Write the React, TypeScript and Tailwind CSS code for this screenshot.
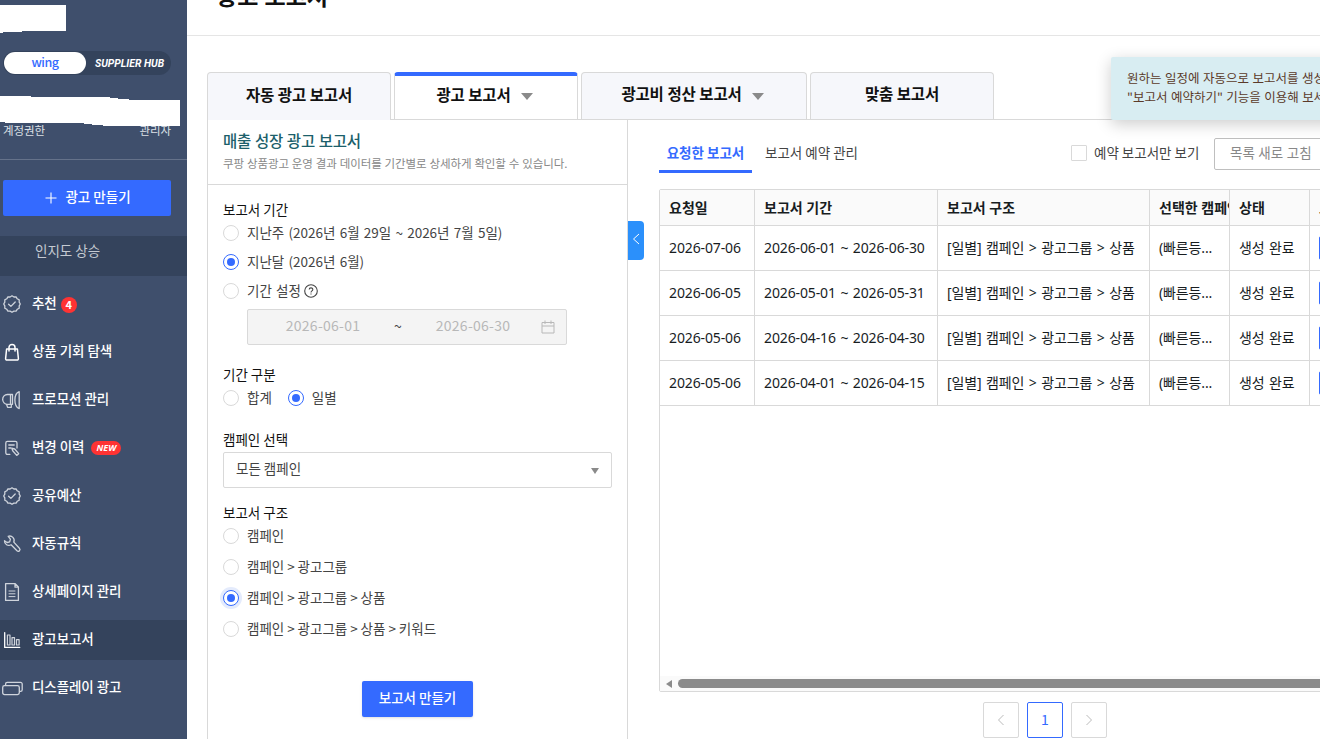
import React from 'react';

type IconProps = { children: React.ReactNode };

const Icon: React.FC<IconProps> = ({ children }) => (
  <svg width="24" height="24" viewBox="0 0 24 24" fill="none" stroke="#cfd4dc" strokeWidth="1.3" strokeLinejoin="round" strokeLinecap="round">
    {children}
  </svg>
);

const BadgeCheckIcon = () => (
  <Icon>
    <path d="M12 3.8l1.9 1.2 2.2-.1 1.1 1.9 2 1.1v2.3l1.1 1.8-1.1 1.9v2.3l-2 1.1-1.1 1.9-2.2-.1-1.9 1.2-1.9-1.2-2.2.1-1.1-1.9-2-1.1v-2.3L3.7 12l1.1-1.8V7.9l2-1.1 1.1-1.9 2.2.1z" />
    <path d="M8.6 12.2l2.3 2.2 4.3-4.4" />
  </Icon>
);

const BagIcon = () => (
  <Icon>
    <g stroke="#fff" strokeWidth="1.5">
      <path d="M6.6 9h10.8l1 9.6a1.4 1.4 0 0 1-1.4 1.5H7a1.4 1.4 0 0 1-1.4-1.5z" />
      <path d="M9 11V7.5a3 3 0 0 1 6 0V11" />
    </g>
  </Icon>
);

const MegaphoneIcon = () => (
  <Icon>
    <path d="M12.5 6.5h-5a4.7 4.7 0 0 0-4.8 4.9 4.7 4.7 0 0 0 4.8 4.900h5z" />
    <path d="M10.5 7v9M19.200 3.600v17c-2.800-1-4.300-4-4.300-8.500s1.500-7.500 4.300-8.500z" />
    <path d="M6.6 16.600l1 2.700h3.700v-2.700" />
  </Icon>
);

const HistoryIcon = () => (
  <Icon>
    <path d="M9.8 18.4H7.4a1.6 1.6 0 0 1-1.6-1.6V7a1.6 1.6 0 0 1 1.6-1.6h8A1.6 1.6 0 0 1 17 7v5" />
    <path d="M8.8 9h5.4M8.8 12h2" />
    <path d="M11.8 12.2l2.9.8 4 4.7-2 1.7-4-4.6z" />
  </Icon>
);

const WrenchIcon = () => (
  <Icon>
    <path d="M8.2 4.3a4.4 4.4 0 0 1 5.6 5.8l5.6 6.2a1.7 1.7 0 0 1-2.4 2.5l-5.9-6a4.4 4.4 0 0 1-6.6-4.1l2.6 1.8 2.6-.7.7-2.6z" />
  </Icon>
);

const DocumentIcon = () => (
  <Icon>
    <path d="M5.6 3.6h9.6l3.2 3.4v13.4H5.6zM15 3.8v3.4h3.2" />
    <path d="M9 11h6M9 13.8h6M9 16.6h6" strokeWidth="1" />
  </Icon>
);

const ChartIcon = () => (
  <Icon>
    <path d="M4.7 4.6v14.8h15" stroke="#fff" />
    <path d="M7.4 17V7h2.6v10zM12 17V9.6h2.5V17zM16.5 17v-5.4h2.6V17z" strokeWidth="1.2" />
  </Icon>
);

const DisplayIcon = () => (
  <Icon>
    <rect x="2.7" y="9.6" width="16.6" height="9" rx="1.8" />
    <path d="M5.6 9.4V8a1.6 1.6 0 0 1 1.6-1.6h13.4A1.6 1.6 0 0 1 22.2 8v5.7a1.6 1.6 0 0 1-1.600 1.600h-1" />
  </Icon>
);

const menus = [
  { label: '추천', icon: <BadgeCheckIcon />, count: '4' },
  { label: '상품 기회 탐색', icon: <BagIcon /> },
  { label: '프로모션 관리', icon: <MegaphoneIcon /> },
  { label: '변경 이력', icon: <HistoryIcon />, isNew: true },
  { label: '공유예산', icon: <BadgeCheckIcon /> },
  { label: '자동규칙', icon: <WrenchIcon /> },
  { label: '상세페이지 관리', icon: <DocumentIcon /> },
  { label: '광고보고서', icon: <ChartIcon />, active: true },
  { label: '디스플레이 광고', icon: <DisplayIcon /> },
];

const Sidebar = () => (
  <aside className="flex h-full w-[187px] shrink-0 flex-col bg-[#3f4f6c] text-white">
    <svg className="mt-[5px] block h-[28px] w-[66px]" viewBox="0 0 66 28">
      <path d="M0 0h66v26H22v1H3v1H0z" fill="#fff" />
    </svg>
    <div className="mt-[18px] ml-[3px] flex h-6 w-[168px] items-center rounded-full bg-[#34435c] pl-px">
      <div className="flex h-[22px] w-[82px] items-center justify-center rounded-full bg-white pb-[2px] text-[12.5px] font-medium tracking-[-0.5px] text-[#346aff]">wing</div>
      <div className="ml-[9px] pt-px font-['Roboto'] text-[10.4px] font-bold whitespace-nowrap italic">SUPPLIER HUB</div>
    </div>
    <svg className="relative z-10 mt-[21px] block h-[30px] w-[180px]" viewBox="0 0 180 30">
      <path d="M0 0h31v1h79v1h8v1h11v1h51v26h-77v-1H92v-1h-8v-1H5v-1H0z" fill="#fff" />
    </svg>
    <div className="-mt-[5px] ml-[3px] flex h-5 w-[168px] items-center justify-between text-[11.5px] tracking-[-0.1px] text-[#dde1e7]">
      <span>계정권한</span>
      <span>관리자</span>
    </div>
    <div className="mt-[18px] h-px bg-[#65728a]" />
    <button className="mt-5 ml-[3px] flex h-9 w-[168px] items-center justify-center rounded-[2px] bg-[#346aff] pl-[2px] text-[13.5px] font-medium">
      <svg className="mr-2" width="12" height="12" viewBox="0 0 12 12" stroke="#fff" strokeWidth="1.1">
        <path d="M6 .5v11M.5 6h11" />
      </svg>
      <span className="pb-[3px]">광고 만들기</span>
    </button>
    <div className="mt-5 h-10 bg-[#34435c] pt-[4px] pl-[35px] text-[13.5px] leading-5 text-[#c5cad2]">인지도 상승</div>
    <nav className="mt-2 flex flex-col gap-2">
      {menus.map((menu) => (
        <div key={menu.label} className={menu.active ? 'flex h-10 items-center bg-[#34435c]' : 'flex h-10 items-center'}>
          {menu.icon}
          <span className="ml-2 pb-[4px] text-[13.5px] font-medium tracking-[-0.1px] [word-spacing:0.2px]">{menu.label}</span>
          {menu.count && (
            <span className="mt-[2px] ml-[4px] flex size-4 items-center justify-center rounded-full bg-[#ff3333] pb-px text-[11px] font-bold">{menu.count}</span>
          )}
          {menu.isNew && (
            <span className="ml-[7px] flex h-[14px] w-[30px] items-center justify-center rounded-full bg-[#ff3333] font-['Open_Sans'] text-[9px] font-bold italic">NEW</span>
          )}
        </div>
      ))}
    </nav>
  </aside>
);

const Caret = () => <span className="mt-[4px] ml-[10px] border-x-[6px] border-t-[7px] border-x-transparent border-t-[#8a8a8a]" />;

const ReportTabs = () => (
  <div className="mt-9 ml-5 flex h-12 items-stretch border-b border-[#d9d9d9] text-[15.5px] font-semibold tracking-[-0.15px] text-[#111] [word-spacing:0.3px]">
    <div className="relative -mb-px flex w-[184px] items-center justify-center rounded-t border border-b-0 border-[#d9d9d9] bg-[#f6f7fb] pb-[3px]">자동 광고 보고서</div>
    <div className="ml-[3px] flex w-[184px] items-center justify-center rounded-t border-x border-t-4 border-x-[#d9d9d9] border-t-[#346aff] bg-white pr-[3px] pb-[6px]">
      광고 보고서
      <Caret />
    </div>
    <div className="ml-[3px] flex w-[226px] items-center justify-center rounded-t border border-b-0 border-[#d9d9d9] bg-[#f6f7fb] pr-[3px] pb-[4px]">
      광고비 정산 보고서
      <Caret />
    </div>
    <div className="ml-[3px] flex w-[184px] items-center justify-center rounded-t border border-b-0 border-[#d9d9d9] bg-[#f6f7fb] pb-[4px]">맞춤 보고서</div>
  </div>
);

type RadioProps = { label: string; checked?: boolean; focused?: boolean; children?: React.ReactNode };

const Radio: React.FC<RadioProps> = ({ label, checked, focused, children }) => (
  <div className="flex h-7 items-center gap-2">
    <span
      className={
        checked
          ? `flex size-4 items-center justify-center rounded-full border border-[#346aff] bg-white ${focused ? 'ring-3 ring-[#e4ebfc]' : ''}`
          : 'size-4 rounded-full border border-[#d9d9d9] bg-white'
      }
    >
      {checked && <span className="size-2 rounded-full bg-[#346aff]" />}
    </span>
    <span className="pb-[2px] whitespace-nowrap">{label}</span>
    {children}
  </div>
);

const ReportForm = () => (
  <section className="w-[421px] shrink-0 border-x border-[#d9d9d9] text-[13.5px] text-[#444]">
    <div className="h-[65px] border-b border-[#d9d9d9] pt-[9px] pl-[15px]">
      <h2 className="text-[15.5px] leading-[23px] font-medium tracking-[-0.2px] text-[#1c5f6b] [word-spacing:0.5px]">매출 성장 광고 보고서</h2>
      <p className="text-[11.5px] leading-[22px] tracking-[-0.1px] text-[#888] [word-spacing:0.5px]">쿠팡 상품광고 운영 결과 데이터를 기간별로 상세하게 확인할 수 있습니다.</p>
    </div>
    <div className="flex flex-col px-[15px] pt-4">
      <h3 className="h-[18px] leading-[16px] text-[#111]">보고서 기간</h3>
      <div className="flex flex-col gap-px [word-spacing:1.2px]">
        <Radio label="지난주 (2026년 6월 29일 ~ 2026년 7월 5일)" />
        <Radio label="지난달 (2026년 6월)" checked />
        <Radio label="기간 설정">
          <svg className="-ml-[5px]" width="14" height="14" viewBox="0 0 14 14" fill="none" stroke="#444" strokeWidth="1.1">
            <circle cx="7" cy="7" r="6.3" />
            <path d="M5.2 5.6c0-2.3 3.6-2.3 3.6-.1C8.8 6.9 7 6.8 7 8.4M7 9.5v1.1" />
          </svg>
        </Radio>
      </div>
      <div className="mt-1 ml-6 flex h-9 w-[320px] items-center rounded-[2px] border border-[#d9d9d9] bg-[#f4f4f4] pb-[2px] text-[14px] tracking-[0.25px] text-[#b8b8b8]">
        <span className="w-[150px] pb-px text-center">2026-06-01</span>
        <span className="-ml-[4px] w-[4px] text-center text-[#444]">~</span>
        <span className="w-[150px] pb-px text-center">2026-06-30</span>
        <svg className="mt-px -ml-[7px]" width="14" height="14" viewBox="0 0 14 14" fill="none" stroke="#b8b8b8">
          <path d="M1 2.5h12V13H1zM1 6h12M4 .5V4M10 .5V4" />
        </svg>
      </div>

      <h3 className="mt-[21px] h-[18px] leading-[16px] text-[#111]">기간 구분</h3>
      <div className="flex gap-4">
        <Radio label="합계" />
        <Radio label="일별" checked />
      </div>

      <h3 className="mt-[19px] h-[18px] leading-[16px] text-[#111]">캠페인 선택</h3>
      <div className="mt-[3px] flex h-9 items-center justify-between rounded-[2px] border border-[#d9d9d9] pr-3 pb-[3px] pl-3">
        모든 캠페인
        <span className="mt-[5px] border-x-[4.5px] border-t-[6px] border-x-transparent border-t-[#8a8a8a]" />
      </div>

      <h3 className="mt-4 h-[18px] leading-[16px] text-[#111]">보고서 구조</h3>
      <div className="flex flex-col gap-[3px] [word-spacing:-0.1px]">
        <Radio label="캠페인" />
        <Radio label="캠페인 > 광고그룹" />
        <Radio label="캠페인 > 광고그룹 > 상품" checked focused />
        <Radio label="캠페인 > 광고그룹 > 상품 > 키워드" />
      </div>
      <button className="mt-[38px] h-9 w-[111px] self-center rounded-[2px] bg-[#346aff] pb-[3px] font-medium text-white shadow-sm">보고서 만들기</button>
    </div>
  </section>
);

const rows = [
  { date: '2026-07-06', period: '2026-06-01 ~ 2026-06-30' },
  { date: '2026-06-05', period: '2026-05-01 ~ 2026-05-31' },
  { date: '2026-05-06', period: '2026-04-16 ~ 2026-04-30' },
  { date: '2026-05-06', period: '2026-04-01 ~ 2026-04-15' },
];

const columns = 'grid grid-cols-[95px_183px_212px_80px_80px_60px] border-b border-[#d9d9d9]';
const cell = 'flex items-center overflow-hidden border-r border-[#d9d9d9] pl-[9px] pb-[2px] whitespace-nowrap';
const headCell = 'flex items-center overflow-hidden border-r border-[#d9d9d9] pl-[9px] pb-px whitespace-nowrap';

const ReportTable = () => (
  <div className="mt-4 flex h-[503px] w-[720px] flex-col rounded-[2px] border border-[#d9d9d9] font-['Noto_Sans','Noto_Sans_CJK_KR',sans-serif] text-[14px] text-[#181d1f]">
    <div className={`${columns} h-9 bg-[#fafafa] font-bold`}>
      <div className={headCell}>요청일</div>
      <div className={headCell}>보고서 기간</div>
      <div className={headCell}>보고서 구조</div>
      <div className={headCell}>선택한 캠페인</div>
      <div className={headCell}>상태</div>
      <div className={headCell}>보고서</div>
    </div>
    {rows.map((row) => (
      <div key={row.period} className={`${columns} h-[45px] tracking-[-0.12px] [word-spacing:1px]`}>
        <div className={cell}>{row.date}</div>
        <div className={cell}>{row.period}</div>
        <div className={cell}>[일별] 캠페인 &gt; 광고그룹 &gt; 상품</div>
        <div className={cell}>(빠른등...</div>
        <div className={cell}>생성 완료</div>
        <div className={cell}>
          <span className="mt-[2px] h-6 w-10 shrink-0 rounded-[2px] border border-[#346aff]" />
        </div>
      </div>
    ))}
    <div className="mt-auto flex h-[15px] items-center bg-[#fafafa] pl-[6px]">
      <span className="border-y-[4px] border-r-[6px] border-y-transparent border-r-[#8b8b8b]" />
      <span className="ml-[6px] h-[9px] flex-1 rounded-l-full bg-[#8b8b8b]" />
    </div>
  </div>
);

const Pagination = () => (
  <div className="mt-[10px] ml-[324px] flex gap-2">
    <button className="flex size-9 items-center justify-center rounded-[2px] border border-[#d9d9d9]">
      <svg width="12" height="12" viewBox="0 0 12 12" fill="none" stroke="#bbb"><path d="M8.5 1l-5 5 5 5" /></svg>
    </button>
    <button className="size-9 rounded-[2px] border border-[#346aff] pb-[2px] text-[14px] text-[#346aff]">1</button>
    <button className="flex size-9 items-center justify-center rounded-[2px] border border-[#d9d9d9]">
      <svg width="12" height="12" viewBox="0 0 12 12" fill="none" stroke="#bbb"><path d="M3.5 1l5 5-5 5" /></svg>
    </button>
  </div>
);

const ReportList = () => (
  <section className="ml-[15px] w-[720px] shrink-0 text-[13.5px] text-[#444]">
    <div className="flex h-[53px] items-end">
      <div className="h-10 w-[93px] border-b-3 border-[#346aff] text-center leading-[38px] font-bold text-[#346aff]">요청한 보고서</div>
      <div className="ml-[13px] h-10 w-[92px] leading-[38px] whitespace-nowrap">보고서 예약 관리</div>
      <span className="mb-3 ml-[214px] size-4 rounded-[1px] border border-[#d9d9d9]" />
      <span className="ml-[7px] h-10 w-[105px] leading-[38px] whitespace-nowrap">예약 보고서만 보기</span>
      <button className="mb-[3px] ml-[15px] h-8 w-[120px] rounded-[2px] border border-[#bfbfbf] pb-[3px] pl-[15px] text-left text-[#888] [word-spacing:0.5px]">목록 새로 고침</button>
    </div>
    <ReportTable />
    <Pagination />
  </section>
);

const App: React.FC = () => {
  return (
    <div className="relative flex h-[739px] w-[1320px] overflow-hidden bg-white font-['Noto_Sans_CJK_KR',sans-serif]">
      <Sidebar />
      <main className="flex min-w-0 flex-1 flex-col overflow-hidden">
        <div className="h-9 shrink-0 border-b border-[#e5e5e5] pl-[29px]">
          <h1 className="-mt-[21px] text-[23px] leading-[32px] font-bold text-[#111] [word-spacing:1px]">광고 보고서</h1>
        </div>
        <ReportTabs />
        <div className="ml-5 flex flex-1">
          <ReportForm />
          <button className="mt-[101px] flex h-[39px] w-4 shrink-0 items-center justify-center rounded-r bg-[#2b90fb] pb-[3px]">
            <svg width="8" height="12" viewBox="0 0 8 12" fill="none" stroke="#fff"><path d="M7 1L1.5 6 7 11" /></svg>
          </button>
          <ReportList />
        </div>
      </main>
      <div className="absolute top-[57px] left-[1111px] h-[63px] w-[260px] rounded-[2px] bg-[#d8edf2] pt-[11px] pl-4 text-[12.5px] leading-[19px] whitespace-nowrap text-[#5b3a29] shadow-[0_4px_16px_rgba(0,0,0,0.2)] [word-spacing:0.7px]">
        원하는 일정에 자동으로 보고서를 생성하려면
        <br />
        "보고서 예약하기" 기능을 이용해 보세요.
      </div>
    </div>
  );
};

export default App;
